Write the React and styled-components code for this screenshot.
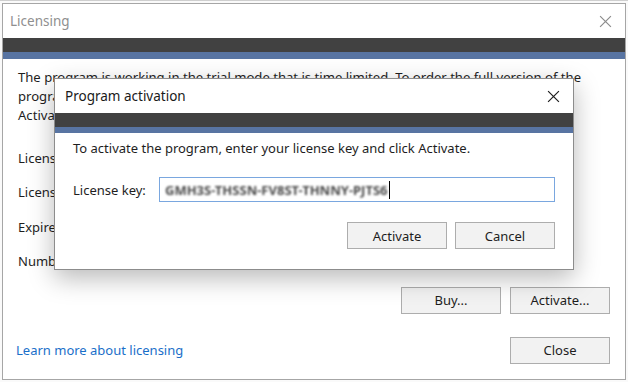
import React from 'react'
import styled, { createGlobalStyle } from 'styled-components'

const GlobalStyle = createGlobalStyle`
    html, body {
        margin: 0;
        padding: 0;
        background: #ffffff;
    }
    body {
        font-family: "Noto Sans", "Open Sans", sans-serif;
        font-size: 13px;
        color: #1e1e1e;
    }
`

const CloseIcon = ({ color = '#1e1e1e', size = 12 }) => (
    <svg width={size} height={size} viewBox="0 0 12 12">
        <path d="M1 1 L11 11 M11 1 L1 11" stroke={color} strokeWidth="1.1" fill="none" />
    </svg>
)

const infoRows = ['License type:', 'License status:', 'Expires:', 'Number of activations:']

const App = () => {
    return (
        <>
            <GlobalStyle />
            <Screen>
                <Window>
                    <TitleBar>
                        <Title inactive>Licensing</Title>
                        <CloseButton><CloseIcon color="#8c8c8c" size={13} /></CloseButton>
                    </TitleBar>
                    <DarkBand />
                    <BlueBand />
                    <Content>
                        <Intro>
                            The program is working in the trial mode that is time limited. To order the full version of the<br />
                            program, click Buy. If you already have a license key, click<br />
                            Activate.
                        </Intro>
                        <InfoList>
                            {infoRows.map(label => (
                                <InfoRow key={label}>{label}</InfoRow>
                            ))}
                        </InfoList>
                        <ButtonRow>
                            <Button>Buy...</Button>
                            <Button>Activate...</Button>
                        </ButtonRow>
                        <Footer>
                            <Link>Learn more about licensing</Link>
                            <Button>Close</Button>
                        </Footer>
                    </Content>
                </Window>

                <Modal>
                    <ModalTitleBar>
                        <Title>Program activation</Title>
                        <CloseButton><CloseIcon size={13} /></CloseButton>
                    </ModalTitleBar>
                    <DarkBand />
                    <BlueBand thin />
                    <ModalBody>
                        <Hint>To activate the program, enter your license key and click Activate.</Hint>
                        <KeyRow>
                            <KeyLabel>License key:</KeyLabel>
                            <KeyInput>
                                <Blurred>GMH3S-THSSN-FV8ST-THNNY-PJTS6</Blurred>
                                <Caret />
                            </KeyInput>
                        </KeyRow>
                        <ModalButtons>
                            <Button>Activate</Button>
                            <Button>Cancel</Button>
                        </ModalButtons>
                    </ModalBody>
                </Modal>
            </Screen>
        </>
    )
}

export default App


const Screen = styled.div`
    position: relative;
    width: 628px;
    height: 382px;
    box-sizing: border-box;
    padding: 2px 2px 2px 2px;
    border-top: 1px solid #cfcfcf;
    overflow: hidden;
    background: #fafafa;
`

const Window = styled.div`
    height: 100%;
    box-sizing: border-box;
    border: 1px solid #a6a6a6;
    background: #ffffff;
    display: flex;
    flex-direction: column;
`

const TitleBar = styled.div`
    height: 34px;
    flex-shrink: 0;
    display: flex;
    align-items: center;
    justify-content: space-between;
    padding: 0 12px 0 7px;
`

const Title = styled.div`
    font-size: 13.5px;
    color: ${props => props.inactive ? '#8f8f8f' : '#1a1a1a'};
`

const CloseButton = styled.div`
    display: flex;
    align-items: center;
    justify-content: center;
    width: 16px;
    height: 16px;
`

const DarkBand = styled.div`
    height: 14px;
    flex-shrink: 0;
    background: #414141;
`

const BlueBand = styled.div`
    height: ${props => props.thin ? '6px' : '7px'};
    flex-shrink: 0;
    background: #5874a2;
`

const Content = styled.div`
    flex: 1;
    display: flex;
    flex-direction: column;
    padding: 9px 15px 14px 15px;
`

const Intro = styled.p`
    margin: 0;
    line-height: 19px;
    font-size: 13.1px;
    white-space: nowrap;
`

const InfoList = styled.div`
    display: flex;
    flex-direction: column;
    gap: 15.3px;
    margin-top: 24px;
`

const InfoRow = styled.div`
    line-height: 19px;
`

const ButtonRow = styled.div`
    display: flex;
    justify-content: flex-end;
    gap: 9px;
    margin-top: 16px;
`

const Button = styled.button`
    width: 100px;
    height: 27px;
    box-sizing: border-box;
    border: 1px solid #adadad;
    background: #f2f2f2;
    font-family: inherit;
    font-size: 13px;
    color: #1e1e1e;
    padding: 0;
`

const Footer = styled.div`
    display: flex;
    align-items: center;
    justify-content: space-between;
    margin-top: 23px;
`

const Link = styled.span`
    color: #1a6fc9;
    margin-left: -2px;
`

const Modal = styled.div`
    position: absolute;
    left: 54px;
    top: 77px;
    width: 520px;
    height: 192px;
    box-sizing: border-box;
    border: 1px solid #8c8c8c;
    background: #ffffff;
    box-shadow: 0 8px 24px rgba(0, 0, 0, 0.28);
    display: flex;
    flex-direction: column;
`

const ModalTitleBar = styled(TitleBar)`
    height: 34px;
    padding: 0 12px 0 10px;
`

const ModalBody = styled.div`
    flex: 1;
    display: flex;
    flex-direction: column;
    padding: 6px 18px 0 18px;
`

const Hint = styled.div`
    line-height: 19px;
`

const KeyRow = styled.div`
    display: flex;
    align-items: center;
    margin-top: 19px;
`

const KeyLabel = styled.div`
    width: 86px;
`

const KeyInput = styled.div`
    flex: 1;
    height: 25px;
    box-sizing: border-box;
    border: 1px solid #7aa7df;
    display: flex;
    align-items: center;
    padding-left: 5px;
`

const Blurred = styled.span`
    color: #4a4a4a;
    filter: blur(1.2px);
    font-weight: 700;
    white-space: nowrap;
`

const Caret = styled.span`
    width: 1px;
    height: 18px;
    background: #000000;
    margin-left: 1px;
`

const ModalButtons = styled.div`
    display: flex;
    justify-content: flex-end;
    gap: 8px;
    margin-top: 20px;
`
